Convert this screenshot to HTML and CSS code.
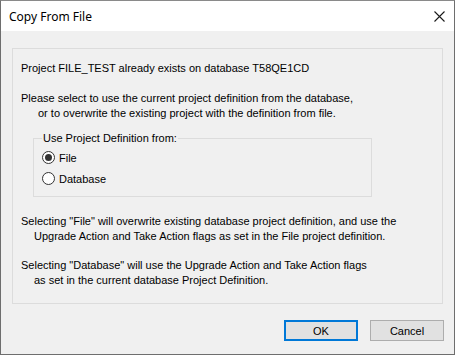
FILE: index.html
```html
<!DOCTYPE html>
<html>
<head>
<meta charset="utf-8">
<link rel="stylesheet" href="styles.css">
</head>
<body>
<div class="window">
  <div class="titlebar">
    <span class="title">Copy From File</span>
    <svg class="close" width="11" height="11" viewBox="0 0 11 11">
      <path d="M0.5 0.5 L10.5 10.5 M10.5 0.5 L0.5 10.5" stroke="#1a1a1a" stroke-width="1.1" fill="none"/>
    </svg>
  </div>
  <div class="client">
    <div class="panel">
      <p class="line">Project FILE_TEST already exists on database T58QE1CD</p>
      <p class="para">Please select to use the current project definition from the database,<br><span class="ind1">or to overwrite the existing project with the definition from file.</span></p>
      <fieldset class="group">
        <legend>Use Project Definition from:</legend>
        <label class="radio-row"><input type="radio" name="src" checked><span>File</span></label>
        <label class="radio-row"><input type="radio" name="src"><span>Database</span></label>
      </fieldset>
      <p class="para p3">Selecting "File" will overwrite existing database project definition, and use the<br><span class="ind2">Upgrade Action and Take Action flags as set in the File project definition.</span></p>
      <p class="para p4">Selecting "Database" will use the Upgrade Action and Take Action flags<br><span class="ind2">as set in the current database Project Definition.</span></p>
    </div>
    <div class="buttons">
      <button class="btn default">OK</button>
      <button class="btn">Cancel</button>
    </div>
  </div>
</div>
</body>
</html>
```
FILE: styles.css
```css
html, body {
  margin: 0;
  padding: 0;
  background: #f0f0f0;
}
.window {
  width: 455px;
  height: 355px;
  box-sizing: border-box;
  border: 1px solid #6e6e6e;
  border-top-color: #8a8a8a;
  background: #f0f0f0;
  display: flex;
  flex-direction: column;
  font-family: "Liberation Sans", Arial, sans-serif;
  font-size: 11px;
  color: #000;
}
.titlebar {
  height: 30px;
  background: #fff;
  display: flex;
  align-items: center;
  justify-content: space-between;
  padding: 0 9px 0 8px;
}
.title {
  font-family: "Noto Sans", "Open Sans", sans-serif;
  font-size: 12px;
  color: #000;
  margin-top: 1px;
}
.close {
  display: block;
  margin-top: 1px;
}
.client {
  flex: 1;
  display: flex;
  flex-direction: column;
  padding: 17px 10px 0 11px;
}
.panel {
  border: 1px solid #dcdcdc;
  height: 256px;
  padding: 12px 8px 0 8px;
  box-sizing: border-box;
  width: 431px;
}
p {
  margin: 0;
  line-height: 15px;
  white-space: nowrap;
}
.para {
  margin-top: 15px;
}
.ind1 {
  padding-left: 17px;
}
.ind2 {
  padding-left: 13px;
}
.group {
  margin: 10px 0 0 12px;
  width: 339px;
  box-sizing: border-box;
  border: 1px solid #dcdcdc;
  padding: 1px 8px 7px 8px;
}
.group legend {
  padding: 0 1px;
  line-height: 15px;
}
.radio-row {
  display: flex;
  align-items: center;
  height: 21px;
  gap: 4px;
}
.radio-row input {
  appearance: none;
  -webkit-appearance: none;
  margin: 0;
  width: 13px;
  height: 13px;
  border: 1px solid #333;
  border-radius: 50%;
  background: #fff;
  box-sizing: border-box;
  display: grid;
  place-items: center;
}
.radio-row input:checked::before {
  content: "";
  width: 7px;
  height: 7px;
  border-radius: 50%;
  background: #333;
}
.p3 {
  margin-top: 17px;
}
.p4 {
  margin-top: 14px;
}
.buttons {
  display: flex;
  justify-content: flex-end;
  gap: 12px;
  margin-top: 16px;
}
.btn {
  width: 74px;
  height: 21px;
  box-sizing: border-box;
  background: #e1e1e1;
  border: 1px solid #adadad;
  font-family: "Liberation Sans", Arial, sans-serif;
  font-size: 11px;
  color: #000;
  padding: 0;
  margin: 0;
}
.btn.default {
  border: 2px solid #0078d7;
}
```
